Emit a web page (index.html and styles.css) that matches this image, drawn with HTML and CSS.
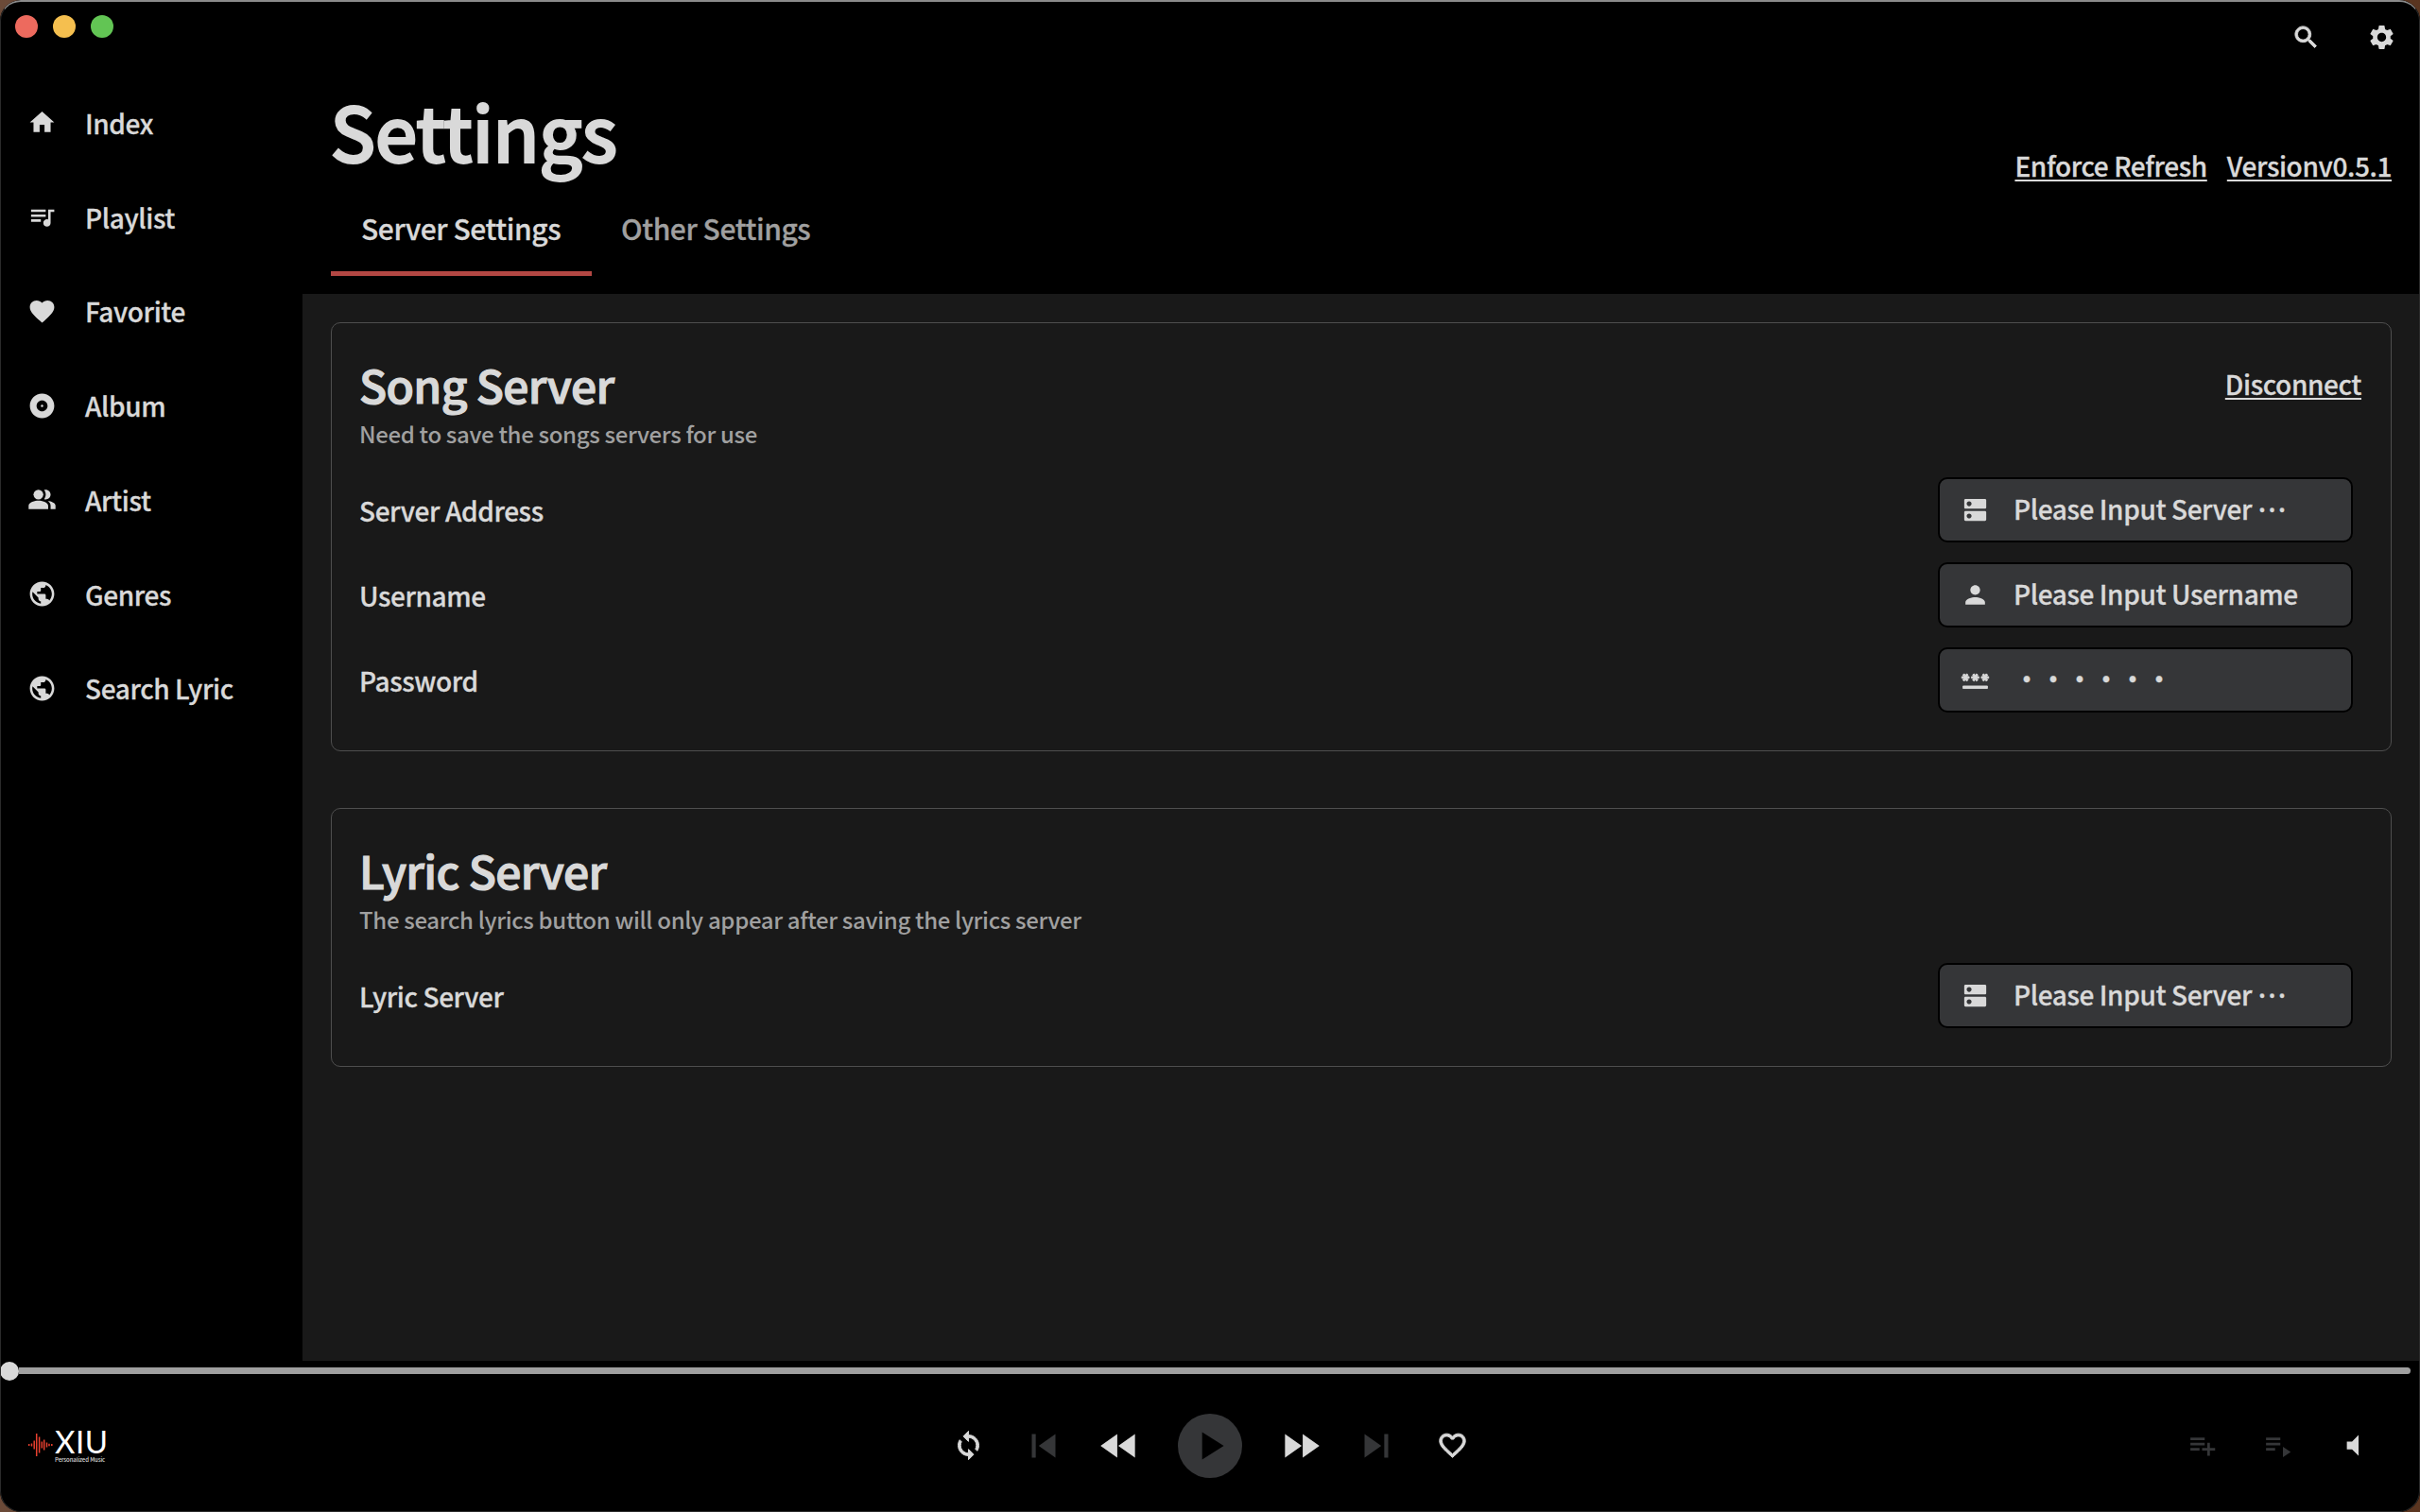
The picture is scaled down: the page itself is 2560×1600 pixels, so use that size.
FILE: index.html
```html
<!DOCTYPE html>
<html lang="en">
<head>
<meta charset="utf-8">
<title>XIU</title>
<link rel="stylesheet" href="styles.css">
</head>
<body>
<svg class="defs" aria-hidden="true">
  <symbol id="home" viewBox="0 0 24 24"><path d="M10 20v-6h4v6h5v-8h3L12 3 2 12h3v8z"/></symbol>
  <symbol id="playlist" viewBox="0 0 24 24"><path d="M15 6H3v2h12V6zm0 4H3v2h12v-2zM3 16h8v-2H3v2zM17 6v8.18c-.31-.11-.65-.18-1-.18-1.66 0-3 1.34-3 3s1.34 3 3 3 3-1.34 3-3V8h3V6h-5z"/></symbol>
  <symbol id="favorite" viewBox="0 0 24 24"><path d="M12 21.35l-1.45-1.32C5.4 15.36 2 12.28 2 8.5 2 5.42 4.42 3 7.5 3c1.74 0 3.41.81 4.5 2.09C13.09 3.81 14.76 3 16.5 3 19.58 3 22 5.42 22 8.5c0 3.78-3.4 6.86-8.55 11.54L12 21.35z"/></symbol>
  <symbol id="album" viewBox="0 0 24 24"><path d="M12 2C6.48 2 2 6.48 2 12s4.48 10 10 10 10-4.48 10-10S17.52 2 12 2zm0 14.5c-2.49 0-4.500-2.010-4.500-4.500S9.510 7.500 12 7.500s4.500 2.010 4.500 4.500-2.010 4.500-4.500 4.500zm0-5.500c-.55 0-1 .45-1 1s.45 1 1 1 1-.45 1-1-.45-1-1-1z"/></symbol>
  <symbol id="people" viewBox="0 0 24 24"><path d="M16.670 13.130C18.040 14.060 19 15.320 19 17v3h4v-3c0-2.180-3.570-3.470-6.330-3.870z"/><circle cx="9" cy="8" r="4"/><path d="M15 12c2.210 0 4-1.790 4-4s-1.790-4-4-4c-.47 0-.91.1-1.330.24C14.500 5.270 15 6.580 15 8s-.5 2.730-1.330 3.760c.42.14.86.24 1.330.24zM9 13c-2.670 0-8 1.340-8 4v3h16v-3c0-2.660-5.330-4-8-4z"/></symbol>
  <symbol id="globe" viewBox="0 0 24 24"><path d="M12 2C6.480 2 2 6.480 2 12s4.480 10 10 10 10-4.480 10-10S17.520 2 12 2zm-1 17.930c-3.950-.49-7-3.850-7-7.930 0-.62.08-1.210.21-1.790L9 15v1c0 1.100.9 2 2 2v1.930zm6.900-2.540c-.26-.81-1-1.390-1.900-1.390h-1v-3c0-.55-.45-1-1-1H8v-2h2c.55 0 1-.45 1-1V7h2c1.100 0 2-.9 2-2v-.41c2.930 1.190 5 4.060 5 7.410 0 2.080-.8 3.970-2.100 5.390z"/></symbol>
  <symbol id="search" viewBox="0 0 24 24"><path d="M15.5 14h-.79l-.28-.27C15.410 12.590 16 11.110 16 9.500 16 5.910 13.090 3 9.500 3S3 5.910 3 9.500 5.910 16 9.500 16c1.610 0 3.090-.59 4.230-1.570l.27.28v.79l5 4.990L20.490 19l-4.990-5zm-6 0C7.010 14 5 11.990 5 9.500S7.010 5 9.500 5 14 7.010 14 9.500 11.990 14 9.500 14z"/></symbol>
  <symbol id="gear" viewBox="0 0 24 24"><path d="M19.140 12.940c.04-.3.06-.61.06-.94 0-.32-.02-.64-.07-.94l2.030-1.580c.18-.14.23-.41.12-.61l-1.920-3.320c-.12-.22-.37-.29-.59-.22l-2.390.96c-.5-.38-1.030-.7-1.620-.94l-.36-2.540c-.04-.24-.24-.41-.48-.41h-3.840c-.24 0-.43.17-.47.41l-.36 2.540c-.59.24-1.130.57-1.620.94l-2.390-.96c-.22-.08-.47 0-.59.22L2.740 8.870c-.12.21-.08.47.12.61l2.030 1.580c-.05.3-.09.63-.09.94s.02.64.07.94l-2.030 1.580c-.18.14-.23.41-.12.61l1.920 3.320c.12.22.37.29.59.22l2.390-.96c.5.38 1.030.7 1.620.94l.36 2.540c.05.24.24.41.48.41h3.840c.24 0 .44-.17.47-.41l.36-2.540c.59-.24 1.130-.56 1.620-.94l2.390.96c.22.08.47 0 .59-.22l1.920-3.320c.12-.22.07-.47-.12-.61l-2.010-1.580zM12 15.600c-1.980 0-3.600-1.620-3.600-3.600s1.620-3.600 3.600-3.600 3.600 1.620 3.600 3.600-1.620 3.600-3.600 3.600z"/></symbol>
  <symbol id="server" viewBox="0 0 24 24"><path d="M20 13H4c-.55 0-1 .45-1 1v6c0 .55.45 1 1 1h16c.55 0 1-.45 1-1v-6c0-.55-.45-1-1-1zM7 19c-1.100 0-2-.9-2-2s.9-2 2-2 2 .9 2 2-.9 2-2 2zM20 3H4c-.55 0-1 .45-1 1v6c0 .55.45 1 1 1h16c.55 0 1-.45 1-1V4c0-.55-.45-1-1-1zM7 9c-1.100 0-2-.9-2-2s.9-2 2-2 2 .9 2 2-.9 2-2 2z"/></symbol>
  <symbol id="person" viewBox="0 0 24 24"><path d="M12 12c2.210 0 4-1.790 4-4s-1.790-4-4-4-4 1.790-4 4 1.790 4 4 4zm0 2c-2.670 0-8 1.340-8 4v2h16v-2c0-2.660-5.330-4-8-4z"/></symbol>
  <symbol id="password" viewBox="0 0 24 24"><path d="M2 17h20v2H2v-2zm1.150-4.050L4 11.470l.85 1.480 1.300-.75-.85-1.480H7v-1.500H5.300l.85-1.470L4.850 7 4 8.470 3.150 7l-1.300.75.85 1.470H1v1.500h1.700l-.85 1.480 1.300.75zm6.700-.75l1.300.75.85-1.480.85 1.480 1.300-.75-.85-1.480H15v-1.500h-1.700l.85-1.470-1.300-.75L12 8.470 11.150 7l-1.300.75.85 1.470H9v1.500h1.700l-.85 1.480zM23 9.220h-1.700l.85-1.470-1.300-.75L20 8.470 19.150 7l-1.300.75.85 1.470H17v1.500h1.700l-.85 1.480 1.300.75.85-1.480.85 1.480 1.300-.75-.85-1.480H23v-1.500z"/></symbol>
  <symbol id="sync" viewBox="0 0 24 24"><path d="M12 4V1L8 5l4 4V6c3.310 0 6 2.690 6 6 0 1.010-.25 1.970-.7 2.800l1.460 1.460C19.540 15.030 20 13.570 20 12c0-4.420-3.580-8-8-8zm0 14c-3.310 0-6-2.690-6-6 0-1.010.25-1.970.7-2.800L5.240 7.740C4.460 8.970 4 10.430 4 12c0 4.420 3.580 8 8 8v3l4-4-4-4v3z"/></symbol>
  <symbol id="prev" viewBox="0 0 24 24"><path d="M6 6h2v12H6zm3.500 6l8.500 6V6z"/></symbol>
  <symbol id="rewind" viewBox="0 0 24 24"><path d="M11 18V6l-8.500 6 8.500 6zm.5-6l8.500 6V6l-8.500 6z"/></symbol>
  <symbol id="play" viewBox="0 0 24 24"><path d="M8 5v14l11-7z"/></symbol>
  <symbol id="forward" viewBox="0 0 24 24"><path d="M4 18l8.500-6L4 6v12zm9-12v12l8.500-6L13 6z"/></symbol>
  <symbol id="next" viewBox="0 0 24 24"><path d="M6 18l8.500-6L6 6v12zM16 6v12h2V6h-2z"/></symbol>
  <symbol id="heart" viewBox="0 0 24 24"><path d="M16.500 3c-1.740 0-3.410.81-4.500 2.090C10.910 3.810 9.240 3 7.500 3 4.420 3 2 5.420 2 8.500c0 3.780 3.400 6.860 8.550 11.540L12 21.350l1.450-1.320C18.600 15.360 22 12.280 22 8.500 22 5.420 19.580 3 16.500 3zm-4.400 15.550l-.1.1-.1-.1C7.140 14.240 4 11.390 4 8.500 4 6.500 5.500 5 7.500 5c1.540 0 3.040.99 3.570 2.360h1.870C13.460 5.990 14.960 5 16.500 5c2 0 3.500 1.500 3.500 3.500 0 2.890-3.140 5.740-7.900 10.050z"/></symbol>
  <symbol id="list-add" viewBox="0 0 24 24"><path d="M14 10H3v2h11v-2zm0-4H3v2h11V6zm4 8v-4h-2v4h-4v2h4v4h2v-4h4v-2h-4zM3 16h7v-2H3v2z"/></symbol>
  <symbol id="list-play" viewBox="0 0 24 24"><path d="M3 10h11v2H3zm0-4h11v2H3zm0 8h7v2H3zm13-1v8l6-4z"/></symbol>
  <symbol id="volume" viewBox="0 0 24 24"><path d="M7 9v6h4l5 5V4l-5 5H7z"/></symbol>
</svg>

<div class="window">
  <div class="main">
    <aside class="sidebar">
      <div class="lights"><i class="light close"></i><i class="light minimize"></i><i class="light zoom"></i></div>
      <nav class="nav">
        <a class="nav-item"><svg class="icon"><use href="#home"/></svg><span>Index</span></a>
        <a class="nav-item"><svg class="icon"><use href="#playlist"/></svg><span>Playlist</span></a>
        <a class="nav-item"><svg class="icon"><use href="#favorite"/></svg><span>Favorite</span></a>
        <a class="nav-item"><svg class="icon"><use href="#album"/></svg><span>Album</span></a>
        <a class="nav-item"><svg class="icon"><use href="#people"/></svg><span>Artist</span></a>
        <a class="nav-item"><svg class="icon"><use href="#globe"/></svg><span>Genres</span></a>
        <a class="nav-item"><svg class="icon"><use href="#globe"/></svg><span>Search Lyric</span></a>
      </nav>
    </aside>

    <section class="page">
      <header class="header">
        <div class="toolbar"><svg class="icon heavy"><use href="#search"/></svg><svg class="icon"><use href="#gear"/></svg></div>
        <div class="heading">
          <h1 class="title">Settings</h1>
          <div class="links"><a class="link">Enforce Refresh</a><a class="link">Versionv0.5.1</a></div>
        </div>
        <div class="tabs"><a class="tab active">Server Settings</a><a class="tab">Other Settings</a></div>
      </header>

      <div class="content">
        <section class="card song">
          <div class="card-head"><h2 class="card-title">Song Server</h2><a class="link">Disconnect</a></div>
          <p class="hint">Need to save the songs servers for use</p>
          <div class="rows">
            <div class="row"><span class="label">Server Address</span><div class="field"><svg class="icon"><use href="#server"/></svg><span class="value">Please Input Server <span class="dots">…</span></span></div></div>
            <div class="row"><span class="label">Username</span><div class="field"><svg class="icon"><use href="#person"/></svg><span class="value">Please Input Username</span></div></div>
            <div class="row"><span class="label">Password</span><div class="field"><svg class="icon heavy"><use href="#password"/></svg><span class="value secret">••••••</span></div></div>
          </div>
        </section>
        <section class="card lyric">
          <div class="card-head"><h2 class="card-title">Lyric Server</h2></div>
          <p class="hint">The search lyrics button will only appear after saving the lyrics server</p>
          <div class="rows">
            <div class="row"><span class="label">Lyric Server</span><div class="field"><svg class="icon"><use href="#server"/></svg><span class="value">Please Input Server <span class="dots">…</span></span></div></div>
          </div>
        </section>
      </div>
    </section>
  </div>

  <footer class="player">
    <div class="progress"><i class="knob"></i><i class="track"></i></div>
    <div class="controls">
      <div class="logo">
        <svg class="wave" viewBox="0 0 26 24"><path d="M.7 11v2M3.500 10.500v3M6.200 7.500v9M8.700 0v24M11.600 3.500v17M14.300 8.500v7M16.700 6.500v11M19.500 9.500v5M22 10.800v2.400M24.800 11v2"/></svg>
        <div class="brand"><span class="name">XIU</span><span class="tagline">Personalized Music</span></div>
      </div>
      <div class="transport">
        <svg class="ctl heavy"><use href="#sync"/></svg>
        <svg class="ctl big dim"><use href="#prev"/></svg>
        <svg class="ctl big"><use href="#rewind"/></svg>
        <span class="play"><svg class="big"><use href="#play"/></svg></span>
        <svg class="ctl big"><use href="#forward"/></svg>
        <svg class="ctl big dim"><use href="#next"/></svg>
        <svg class="ctl heavy"><use href="#heart"/></svg>
      </div>
      <div class="extras">
        <svg class="ctl dim"><use href="#list-add"/></svg>
        <svg class="ctl dim"><use href="#list-play"/></svg>
        <svg class="ctl"><use href="#volume"/></svg>
      </div>
    </div>
  </footer>
</div>
</body>
</html>
```
FILE: styles.css
```css
* { box-sizing: border-box; }
body {
  margin: 0;
  width: 2560px;
  height: 1600px;
  overflow: hidden;
  background: linear-gradient(90deg, #6b4a38, #2a2523 60%, #5a3520);
  color: #d9d9d9;
  font-family: "Noto Sans CJK SC", "Noto Sans", sans-serif;
  font-weight: 500;
  font-size: 28px;
  -webkit-text-stroke: .3px currentColor;
}
span, a, h1, h2, p { letter-spacing: -0.014em; }
h1, h2, p { margin: 0; font-weight: 500; }
svg { display: block; fill: currentColor; flex: none; }
.defs { width: 0; height: 0; position: absolute; }
.icon { width: 31px; height: 31px; }
.heavy { stroke: currentColor; stroke-width: .7; stroke-linejoin: round; }

.window {
  position: relative;
  display: flex;
  flex-direction: column;
  height: 1600px;
  background: #000;
  border-radius: 22px;
  overflow: hidden;
  padding-top: 2px;
}
/* Thin window outline, drawn above the panels */
.window::after {
  content: "";
  position: absolute;
  inset: 0;
  border: 1px solid #2b2b2b;
  border-top: 2px solid #8b8b8b;
  border-radius: 22px;
  pointer-events: none;
}
.main { display: flex; height: 1438px; }

.sidebar { width: 320px; }
.lights { display: flex; gap: 16px; padding: 14px 0 0 16px; height: 78px; }
.light { width: 24px; height: 24px; border-radius: 50%; }
.close { background: #ed6a5e; }
.minimize { background: #f5bf4f; }
.zoom { background: #62c554; }
.nav-item {
  display: flex;
  align-items: center;
  gap: 30px;
  height: 99.75px;
  padding-left: 29px;
}

.page { flex: 1; display: flex; flex-direction: column; }
.header { height: 309px; padding: 0 30px; }
.toolbar { display: flex; justify-content: flex-end; gap: 49px; height: 80px; padding-top: 22px; margin-right: -5px; }
.heading { display: flex; justify-content: space-between; height: 116px; margin-left: -1px; }
.title { font-size: 80px; line-height: 111px; -webkit-text-stroke: 1.8px currentColor; }
.links { display: flex; gap: 21px; padding-top: 70px; }
.link {
  height: 40px;
  line-height: 46px;
  text-decoration: underline;
  text-decoration-thickness: 2px;
  text-underline-offset: 3px;
}
.tabs { display: flex; height: 94px; }
.tab { height: 94px; line-height: 86px; padding: 0 32px; font-size: 30px; color: #a0a0a0; }
.tab + .tab { padding-left: 31px; }
.active { width: 276px; color: #d9d9d9; border-bottom: 5px solid #b34743; }

.content { flex: 1; background: #191919; padding: 30px; }
.card { border: 1px solid #4e4e4e; border-radius: 10px; padding: 30px 31px 0 29px; }
.song { height: 454px; margin-bottom: 60px; }
.lyric { height: 274px; }
.card-head { display: flex; justify-content: space-between; height: 67px; }
.card-head .link { margin-top: 11px; }
.card-title { font-size: 48px; line-height: 68px; -webkit-text-stroke: 1.2px currentColor; }
.hint { font-size: 24px; line-height: 39px; height: 40px; color: #a0a0a0; -webkit-text-stroke: 0; }
.rows { padding-top: 15px; }
.row { display: flex; align-items: center; justify-content: space-between; height: 90px; padding-right: 9px; }
.label { margin-top: 2px; }
.field {
  display: flex;
  align-items: center;
  gap: 25px;
  width: 439px;
  height: 69px;
  padding-left: 22px;
  background: #353638;
  border: 2px solid #000;
  border-radius: 10px;
}
.value { margin-top: -3px; }
.secret { letter-spacing: 0; }
.dots { vertical-align: 8px; line-height: 0; }

.player { flex: 1; }
.progress { display: flex; align-items: center; height: 21px; }
.knob { width: 20px; height: 20px; border-radius: 50%; background: #d9d9d9; }
.track { width: 2530px; height: 7px; background: #a0a0a0; border-radius: 0 4px 4px 0; }
.controls { display: grid; grid-template-columns: 1fr auto 1fr; align-items: center; height: 137px; }
.logo { display: flex; gap: 2px; padding: 0 0 4px 30px; -webkit-text-stroke: 0; }
.wave { width: 26px; height: 24px; fill: none; stroke: #e8402f; stroke-width: 1.500; margin-top: 9px; }
.brand { display: flex; flex-direction: column; }
.name { font: 400 33px/34px Lato, sans-serif; letter-spacing: .5px; color: #fff; }
.tagline { font-size: 6px; line-height: 6px; }
.transport { display: flex; align-items: center; }
.ctl { width: 33px; height: 33px; margin: 0 23.5px; }
.big { width: 50px; height: 50px; margin: 0 15px; }
.dim { color: #353638; }
.play { width: 68px; height: 68px; margin: 0 22px; border-radius: 50%; background: #353638; color: #000; display: grid; place-items: center; }
.play .big { margin: 0; }
.extras { display: flex; justify-content: flex-end; padding-right: 31px; }
```
